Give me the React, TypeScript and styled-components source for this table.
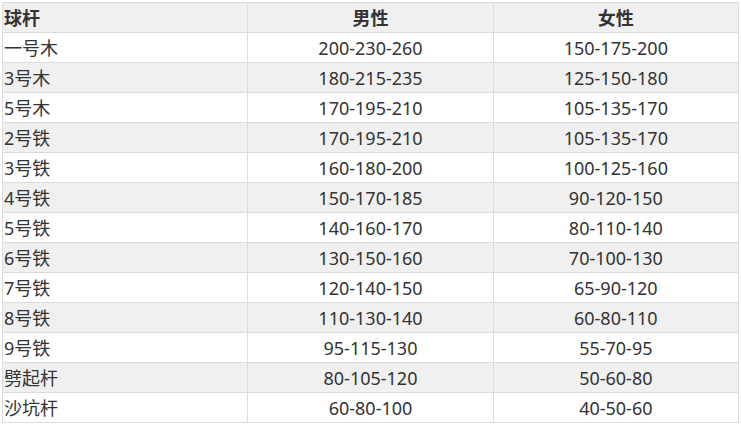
import React from "react";
import styled, { createGlobalStyle } from "styled-components";

const Global = createGlobalStyle`
  html, body { margin: 0; padding: 0; background: #fff; }
  body { font-family: "Noto Sans", "Noto Sans CJK SC", sans-serif; color: #333; }
`;

const Wrap = styled.div`
  padding: 2px 2px 0 2px;
`;

const Table = styled.table`
  border-collapse: collapse;
  width: 737px;
  table-layout: fixed;
  font-size: 18px;
`;

const Row = styled.tr<{ $shade: boolean }>`
  background: ${(p) => (p.$shade ? "#f0f0f0" : "#ffffff")};
`;

const Cell = styled.td<{ $left?: boolean; $head?: boolean }>`
  border: 1px solid #dcdcdc;
  height: 30px;
  padding: 0 1px;
  box-sizing: border-box;
  line-height: 28px;
  text-align: ${(p) => (p.$left ? "left" : "center")};
  font-weight: ${(p) => (p.$head ? 700 : 400)};
  white-space: nowrap;
`;

const rows: [string, string, string][] = [
  ["一号木", "200-230-260", "150-175-200"],
  ["3号木", "180-215-235", "125-150-180"],
  ["5号木", "170-195-210", "105-135-170"],
  ["2号铁", "170-195-210", "105-135-170"],
  ["3号铁", "160-180-200", "100-125-160"],
  ["4号铁", "150-170-185", "90-120-150"],
  ["5号铁", "140-160-170", "80-110-140"],
  ["6号铁", "130-150-160", "70-100-130"],
  ["7号铁", "120-140-150", "65-90-120"],
  ["8号铁", "110-130-140", "60-80-110"],
  ["9号铁", "95-115-130", "55-70-95"],
  ["劈起杆", "80-105-120", "50-60-80"],
  ["沙坑杆", "60-80-100", "40-50-60"],
];

export default function App() {
  return (
    <>
      <Global />
      <Wrap>
        <Table>
          <tbody>
            <Row $shade>
              <Cell $left $head>球杆</Cell>
              <Cell $head>男性</Cell>
              <Cell $head>女性</Cell>
            </Row>
            {rows.map((r, i) => (
              <Row key={r[0]} $shade={i % 2 === 1}>
                <Cell $left>{r[0]}</Cell>
                <Cell>{r[1]}</Cell>
                <Cell>{r[2]}</Cell>
              </Row>
            ))}
          </tbody>
        </Table>
      </Wrap>
    </>
  );
}
